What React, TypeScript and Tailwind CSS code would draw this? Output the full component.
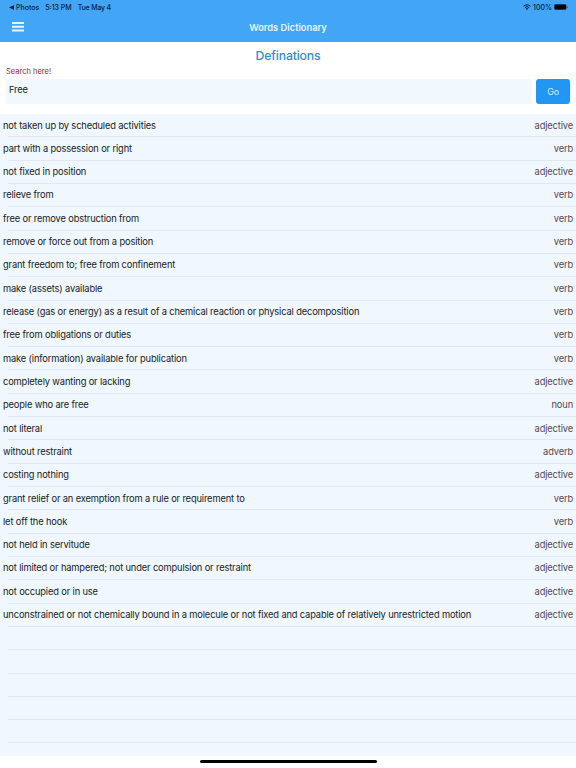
interface Definition {
  meaning: string;
  type: "adjective" | "adverb" | "noun" | "verb";
}

const DEFINITIONS: Definition[] = [
  { meaning: "not taken up by scheduled activities", type: "adjective" },
  { meaning: "part with a possession or right", type: "verb" },
  { meaning: "not fixed in position", type: "adjective" },
  { meaning: "relieve from", type: "verb" },
  { meaning: "free or remove obstruction from", type: "verb" },
  { meaning: "remove or force out from a position", type: "verb" },
  { meaning: "grant freedom to; free from confinement", type: "verb" },
  { meaning: "make (assets) available", type: "verb" },
  {
    meaning:
      "release (gas or energy) as a result of a chemical reaction or physical decomposition",
    type: "verb",
  },
  { meaning: "free from obligations or duties", type: "verb" },
  { meaning: "make (information) available for publication", type: "verb" },
  { meaning: "completely wanting or lacking", type: "adjective" },
  { meaning: "people who are free", type: "noun" },
  { meaning: "not literal", type: "adjective" },
  { meaning: "without restraint", type: "adverb" },
  { meaning: "costing nothing", type: "adjective" },
  {
    meaning: "grant relief or an exemption from a rule or requirement to",
    type: "verb",
  },
  { meaning: "let off the hook", type: "verb" },
  { meaning: "not held in servitude", type: "adjective" },
  {
    meaning: "not limited or hampered; not under compulsion or restraint",
    type: "adjective",
  },
  { meaning: "not occupied or in use", type: "adjective" },
  {
    meaning:
      "unconstrained or not chemically bound in a molecule or not fixed and capable of relatively unrestricted motion",
    type: "adjective",
  },
];

const EMPTY_ROWS = 5;

const StatusBar = () => (
  <div className="flex h-[14px] items-center justify-between pr-2 pl-[9px] text-[7px] leading-none font-medium text-[#06233f]">
    <div className="flex items-center">
      <svg viewBox="0 0 6 6" className="mr-[2px] h-[5px] w-[5px]" fill="currentColor">
        <path d="M0 3 6 0v6z" />
      </svg>
      <span>Photos</span>
      <span className="ml-[6px]">5:13 PM</span>
      <span className="ml-[6px] tracking-[-0.2px]">Tue May 4</span>
    </div>
    <div className="flex items-center">
      <svg viewBox="0 0 16 12" className="h-[6px] w-2" fill="none" stroke="currentColor">
        <path d="M1 4.5a10 10 0 0 1 14 0M3.6 7.3a6.2 6.2 0 0 1 8.8 0" strokeWidth="2" />
        <path d="M8 12 5.5 9.3a3.6 3.6 0 0 1 5 0z" fill="currentColor" stroke="none" />
      </svg>
      <span className="ml-[2px]">100%</span>
      <svg viewBox="0 0 28 12" className="ml-[2px] h-[6px] w-[14px]">
        <rect x="0.5" y="0.5" width="24" height="11" rx="3" fill="#000" stroke="#174a75" />
        <path d="M26 4v4c2-.5 2-3.500 0-4z" fill="#174a75" />
      </svg>
    </div>
  </div>
);

const Header = () => (
  <header className="h-[42px] bg-[#42a5f5]">
    <StatusBar />
    <div className="grid h-7 grid-cols-3 items-center px-3">
      <button aria-label="Menu" className="mb-[2px] w-3">
        <svg viewBox="0 0 12 10" className="h-[10px] w-3" fill="#e9f8ff">
          <path d="M0 0h12v2H0zM0 3.800h12v2H0zM0 7.500h12v2H0z" />
        </svg>
      </button>
      <h1 className="text-center text-[9.3px] leading-none font-semibold text-[#e6f5ff]">
        Words Dictionary
      </h1>
    </div>
  </header>
);

const SearchForm = () => (
  <section className="h-[72px]">
    <h2 className="pt-[6px] text-center text-[12.2px] leading-4 font-medium tracking-[-0.15px] text-[#2a8ce2]">
      Definations
    </h2>
    <label htmlFor="word" className="block pt-[2px] pl-[6px] text-[7.5px] leading-[11px] text-[#9c2530]">
      Search here!
    </label>
    <div className="mt-[2px] flex gap-1 pr-[6px] pl-[6px]">
      <input
        id="word"
        defaultValue="Free"
        className="h-[25px] min-w-0 flex-1 bg-[#f1f8fe] pb-[4px] pl-[3px] text-[9.3px] tracking-[-0.14px] text-[#151b22] outline-none"
      />
      <button className="h-[25px] w-[34px] rounded-[3px] bg-[#2196f3] text-[9px] tracking-[-0.3px] text-[#d5edff]">
        Go
      </button>
    </div>
  </section>
);

const DefinitionList = () => (
  <ul className="h-[642px] overflow-hidden bg-[#f0f7ff] text-[9.3px] leading-none tracking-[-0.14px]">
    {DEFINITIONS.map(({ meaning, type }) => (
      <li key={meaning} className="flex h-[23.32px] flex-col">
        <div className="flex flex-1 items-center justify-between px-[3px]">
          <span className="whitespace-nowrap text-[#171c24]">{meaning}</span>
          <span className="text-[#57494f]">{type}</span>
        </div>
        <div className="ml-2 h-px bg-[#e2e8f0]" />
      </li>
    ))}
    {Array.from({ length: EMPTY_ROWS }, (_, index) => (
      <li key={index} className="flex h-[23.32px] flex-col justify-end">
        <div className="ml-2 h-px bg-[#e2e8f0]" />
      </li>
    ))}
  </ul>
);

const App = () => (
  <main className="h-screen w-full overflow-hidden bg-white font-['Inter',sans-serif]">
    <Header />
    <SearchForm />
    <DefinitionList />
    {/* home indicator */}
    <div className="mx-auto mt-[4px] h-[3px] w-[177px] rounded-full bg-black" />
  </main>
);

export default App;
